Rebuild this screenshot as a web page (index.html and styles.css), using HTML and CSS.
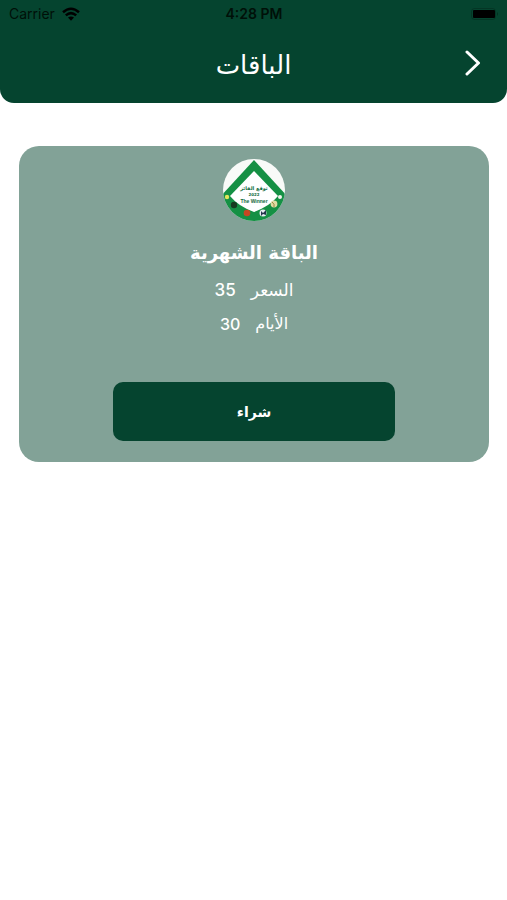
FILE: index.html
```html
<!DOCTYPE html>
<html lang="ar" dir="rtl">
<head>
<meta charset="utf-8">
<meta name="viewport" content="width=device-width, initial-scale=1">
<title>الباقات</title>
<link rel="stylesheet" href="styles.css">
</head>
<body>
<header class="header">
  <div class="status" dir="ltr">
    <span class="carrier">Carrier
      <svg class="wifi" viewBox="0 0 18 14" aria-hidden="true"><g fill="none" stroke="currentColor" stroke-width="2.5"><path d="M1 5.2Q9-1.8 17 5.2"/><path d="M3.8 8.4Q9 3.8 14.2 8.4"/></g><path d="M6 10.6Q9 8.2 12 10.6L9 13.7Z" fill="currentColor"/></svg>
    </span>
    <span class="time">4:28 PM</span>
    <svg class="battery" viewBox="0 0 28 12" aria-hidden="true"><rect x=".5" y=".5" width="24" height="11" rx="3" fill="none" stroke="currentColor" opacity=".2"/><rect x="2" y="2" width="22" height="8" rx="1" fill="currentColor"/><path d="M26 4Q28 6 26 8Z" fill="currentColor" opacity=".3"/></svg>
  </div>
  <div class="bar">
    <button class="back" type="button" aria-label="رجوع"><svg viewBox="0 0 16 26" aria-hidden="true"><path d="M2 2L13.500 13L2 24" fill="none" stroke="currentColor" stroke-width="3" stroke-linecap="round" stroke-linejoin="round"/></svg></button>
    <h1 class="title">الباقات</h1>
  </div>
</header>
<main class="content">
  <article class="card">
    <svg class="logo" viewBox="0 0 62 62" role="img" aria-label="The Winner">
      <defs><clipPath id="disc"><circle cx="31" cy="31" r="31"/></clipPath></defs>
      <g clip-path="url(#disc)">
        <rect width="62" height="62" fill="#f8faf8"/>
        <path d="M31 1L64 37V62H-2V37Z" fill="#159044"/>
        <path d="M31 12L55 37Q47 47 31 53Q15 47 7 37Z" fill="#fff"/>
        <circle cx="4" cy="38" r="2.200" fill="#e2e65b"/>
        <circle cx="11" cy="46" r="3.200" fill="#173b20"/>
        <circle cx="24" cy="54" r="3.300" fill="#c54722"/>
        <circle cx="40" cy="54" r="3.500" fill="#e8edf2"/><path d="M38 52L40 54L43 51V56L40 55L38 57Z" fill="#23354b"/>
        <circle cx="51" cy="45" r="3.400" fill="#dfdba4"/><path d="M49 43Q52 45 51 48" fill="none" stroke="#9c843e"/>
        <circle cx="57" cy="38" r="2" fill="#f3f3ee"/>
      </g>
      <g class="logo-text" text-anchor="middle"><text x="31" y="31" font-size="5">توقع الفائز</text><text x="31" y="37" font-size="4">2022</text><text class="latin" x="31" y="44" font-size="5">The Winner</text></g>
    </svg>
    <h2 class="name">الباقة الشهرية</h2>
    <p class="detail price"><span>السعر</span><span>35</span></p>
    <p class="detail days"><span>الأيام</span><span>30</span></p>
    <button class="buy" type="button">شراء</button>
  </article>
</main>
</body>
</html>
```
FILE: styles.css
```css
* { box-sizing: border-box; }
body {
  margin: 0;
  background: #fff;
  font-family: "DejaVu Sans", sans-serif;
}
.header {
  padding-bottom: 4px;
  border-radius: 0 0 14px 14px;
  background: #05442f;
}
.status {
  display: grid;
  grid-template-columns: 1fr auto 1fr;
  align-items: center;
  height: 27px;
  padding: 0 8px 0 9px;
  color: #001008;
  font-family: Inter, sans-serif;
  font-size: 14px;
}
.carrier { display: flex; align-items: center; gap: 7px; }
.wifi { width: 18px; height: 14px; color: #000; }
.time { font-weight: 600; }
.battery { justify-self: end; width: 28px; height: 12px; color: #000; }
.bar {
  display: grid;
  grid-template-columns: 1fr auto 1fr;
  align-items: center;
  height: 72px;
  padding: 0 26px;
  color: #fff;
}
.back {
  justify-self: start;
  height: 26px;
  padding: 0;
  border: 0;
  background: none;
  color: inherit;
}
.back svg { display: block; width: 16px; height: 26px; }
.title { margin: 0; padding-top: 4px; font-size: 26px; font-weight: 400; line-height: 40px; }
.content { padding: 43px 18px 0 19px; }
.card {
  display: flex;
  flex-direction: column;
  align-items: center;
  padding: 13px 0 21px;
  border-radius: 20px;
  background: #82a297;
  color: #fff;
}
.logo { display: block; width: 62px; height: 62px; }
.logo-text { fill: #126b40; font-family: "DejaVu Sans", sans-serif; font-weight: 700; }
.latin { font-family: "Liberation Sans", sans-serif; }
.name { margin: 16px 0 4px; font-size: 18px; line-height: 32px; }
.detail { display: flex; gap: 15px; margin: 0; line-height: 34px; font-weight: 400; }
.detail span + span { font-family: Inter, sans-serif; font-weight: 500; }
.price { font-size: 17px; }
.days { font-size: 16px; }
.buy {
  width: 60%;
  height: 59px;
  margin-top: 41px;
  padding: 0;
  border: 0;
  border-radius: 10px;
  background: #05442f;
  color: #fff;
  font: 700 14px "DejaVu Sans", sans-serif;
}
```
